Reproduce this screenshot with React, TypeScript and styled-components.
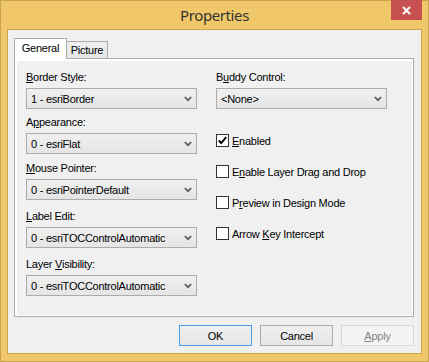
import React from "react";
import styled, { createGlobalStyle } from "styled-components";

const Global = createGlobalStyle`
  html, body { margin: 0; padding: 0; background: #ffffff; }
  * { box-sizing: border-box; }
`;

const Window = styled.div`
  width: 429px;
  height: 362px;
  border: 1px solid #c9a448;
  background: #f0c869;
  display: flex;
  flex-direction: column;
  padding: 0 6px 7px 6px;
  font-family: "Liberation Sans", Arial, sans-serif;
  font-size: 11px;
  letter-spacing: -0.25px;
  color: #000;
`;

const TitleBar = styled.div`
  height: 28px;
  display: grid;
  grid-template-columns: 1fr auto 1fr;
  align-items: start;
`;

const Title = styled.div`
  grid-column: 2;
  font-family: "Noto Sans", "Open Sans", sans-serif;
  font-size: 15px;
  letter-spacing: -0.4px;
  line-height: 20px;
  color: #333333;
  padding-top: 4px;
`;

const CloseButton = styled.div`
  grid-column: 3;
  justify-self: end;
  width: 31px;
  height: 20px;
  margin-top: -1px;
  background: #c75050;
  display: flex;
  align-items: center;
  justify-content: center;
`;

const Client = styled.div`
  flex: 1;
  border: 1px solid #c9a448;
  background: #f0f0f0;
  padding: 8px 7px 7px 6px;
  display: flex;
  flex-direction: column;
`;

const TabRow = styled.div`
  height: 20px;
  display: flex;
  align-items: flex-end;
`;

const Tab = styled.div<{ $active?: boolean }>`
  position: relative;
  display: flex;
  align-items: center;
  justify-content: center;
  border: 1px solid #acacac;
  border-bottom: none;
  ${(p) =>
    p.$active
      ? `
    z-index: 2;
    width: 53px;
    height: 21px;
    margin-bottom: -1px;
    background: #ffffff;
    padding-bottom: 2px;
  `
      : `
    z-index: 1;
    width: 42px;
    height: 17px;
    margin-left: -1px;
    background: linear-gradient(#f0f0f0, #e5e5e5);
  `}
`;

const Panel = styled.div`
  flex: 1;
  border: 1px solid #acacac;
  box-shadow: inset 2px 2px 0 #ffffff, inset -1px -1px 0 #ffffff;
  padding: 12px 0 0 11px;
  display: grid;
  grid-template-columns: 171px 171px;
  column-gap: 19px;
  align-content: start;
`;

const Column = styled.div`
  display: flex;
  flex-direction: column;
`;

const Field = styled.div<{ $gap: number }>`
  display: flex;
  flex-direction: column;
  gap: 4px;
  margin-top: ${(p) => p.$gap}px;
`;

const Label = styled.div`
  line-height: 13px;
  height: 13px;
  white-space: nowrap;
`;

const Key = styled.span`
  text-decoration: underline;
  text-underline-offset: 1px;
`;

const Combo = styled.div`
  height: 21px;
  border: 1px solid #acacac;
  background: linear-gradient(#f0f0f0, #e5e5e5);
  display: flex;
  align-items: center;
  justify-content: space-between;
  padding: 0 4px 0 4px;
  white-space: nowrap;
`;

const CheckRow = styled.div<{ $gap: number }>`
  display: flex;
  align-items: center;
  gap: 3px;
  height: 13px;
  margin-top: ${(p) => p.$gap}px;
  white-space: nowrap;
`;

const Box = styled.div`
  width: 13px;
  height: 13px;
  border: 1px solid #333333;
  background: #ffffff;
  display: flex;
  align-items: center;
  justify-content: center;
`;

const ButtonRow = styled.div`
  margin-top: 8px;
  display: flex;
  justify-content: flex-end;
  gap: 8px;
`;

const Button = styled.div<{ $variant?: "default" | "normal" | "disabled" }>`
  width: 73px;
  height: 21px;
  display: flex;
  align-items: center;
  justify-content: center;
  border: 1px solid
    ${(p) =>
      p.$variant === "default"
        ? "#4a9be8"
        : p.$variant === "disabled"
        ? "#d9d9d9"
        : "#acacac"};
  background: ${(p) =>
    p.$variant === "disabled" ? "#f4f4f4" : "linear-gradient(#f0f0f0, #e5e5e5)"};
  color: ${(p) => (p.$variant === "disabled" ? "#838383" : "#000000")};
`;

const Chevron = () => (
  <svg width="8" height="6" viewBox="0 0 8 6">
    <path d="M0.8 1 L4 4.2 L7.2 1" fill="none" stroke="#5a5a5a" strokeWidth="1.7" />
  </svg>
);

const CloseX = () => (
  <svg width="9" height="9" viewBox="0 0 9 9">
    <path d="M1 1 L8 8 M8 1 L1 8" stroke="#ffffff" strokeWidth="2" />
  </svg>
);

const Check = () => (
  <svg width="11" height="11" viewBox="0 0 11 11">
    <path d="M1.8 5.5 L4.2 8 L9.2 2.2" fill="none" stroke="#000000" strokeWidth="1.9" />
  </svg>
);

type FieldDef = { label: React.ReactNode; value: string; gap: number };

const leftFields: FieldDef[] = [
  { label: <><Key>B</Key>order Style:</>, value: "1 - esriBorder", gap: 0 },
  { label: <>A<Key>p</Key>pearance:</>, value: "0 - esriFlat", gap: 7 },
  { label: <><Key>M</Key>ouse Pointer:</>, value: "0 - esriPointerDefault", gap: 8 },
  { label: <><Key>L</Key>abel Edit:</>, value: "0 - esriTOCControlAutomatic", gap: 10 },
  { label: <>Layer <Key>V</Key>isibility:</>, value: "0 - esriTOCControlAutomatic", gap: 10 },
];

const checks: { label: React.ReactNode; checked: boolean; gap: number }[] = [
  { label: <><Key>E</Key>nabled</>, checked: true, gap: 25 },
  { label: <>E<Key>n</Key>able Layer Drag and Drop</>, checked: false, gap: 18 },
  { label: <>P<Key>r</Key>eview in Design Mode</>, checked: false, gap: 18 },
  { label: <>Arrow <Key>K</Key>ey Intercept</>, checked: false, gap: 18 },
];

export default function App() {
  return (
    <>
      <Global />
      <Window>
        <TitleBar>
          <Title>Properties</Title>
          <CloseButton>
            <CloseX />
          </CloseButton>
        </TitleBar>
        <Client>
          <TabRow>
            <Tab $active>General</Tab>
            <Tab>Picture</Tab>
          </TabRow>
          <Panel>
            <Column>
              {leftFields.map((f, i) => (
                <Field key={i} $gap={f.gap}>
                  <Label>{f.label}</Label>
                  <Combo>
                    <span>{f.value}</span>
                    <Chevron />
                  </Combo>
                </Field>
              ))}
            </Column>
            <Column>
              <Field $gap={0}>
                <Label>
                  B<Key>u</Key>ddy Control:
                </Label>
                <Combo>
                  <span>&lt;None&gt;</span>
                  <Chevron />
                </Combo>
              </Field>
              {checks.map((c, i) => (
                <CheckRow key={i} $gap={c.gap}>
                  <Box>{c.checked && <Check />}</Box>
                  <span>{c.label}</span>
                </CheckRow>
              ))}
            </Column>
          </Panel>
          <ButtonRow>
            <Button $variant="default">OK</Button>
            <Button>Cancel</Button>
            <Button $variant="disabled">
              <span>
                <Key>A</Key>pply
              </span>
            </Button>
          </ButtonRow>
        </Client>
      </Window>
    </>
  );
}
